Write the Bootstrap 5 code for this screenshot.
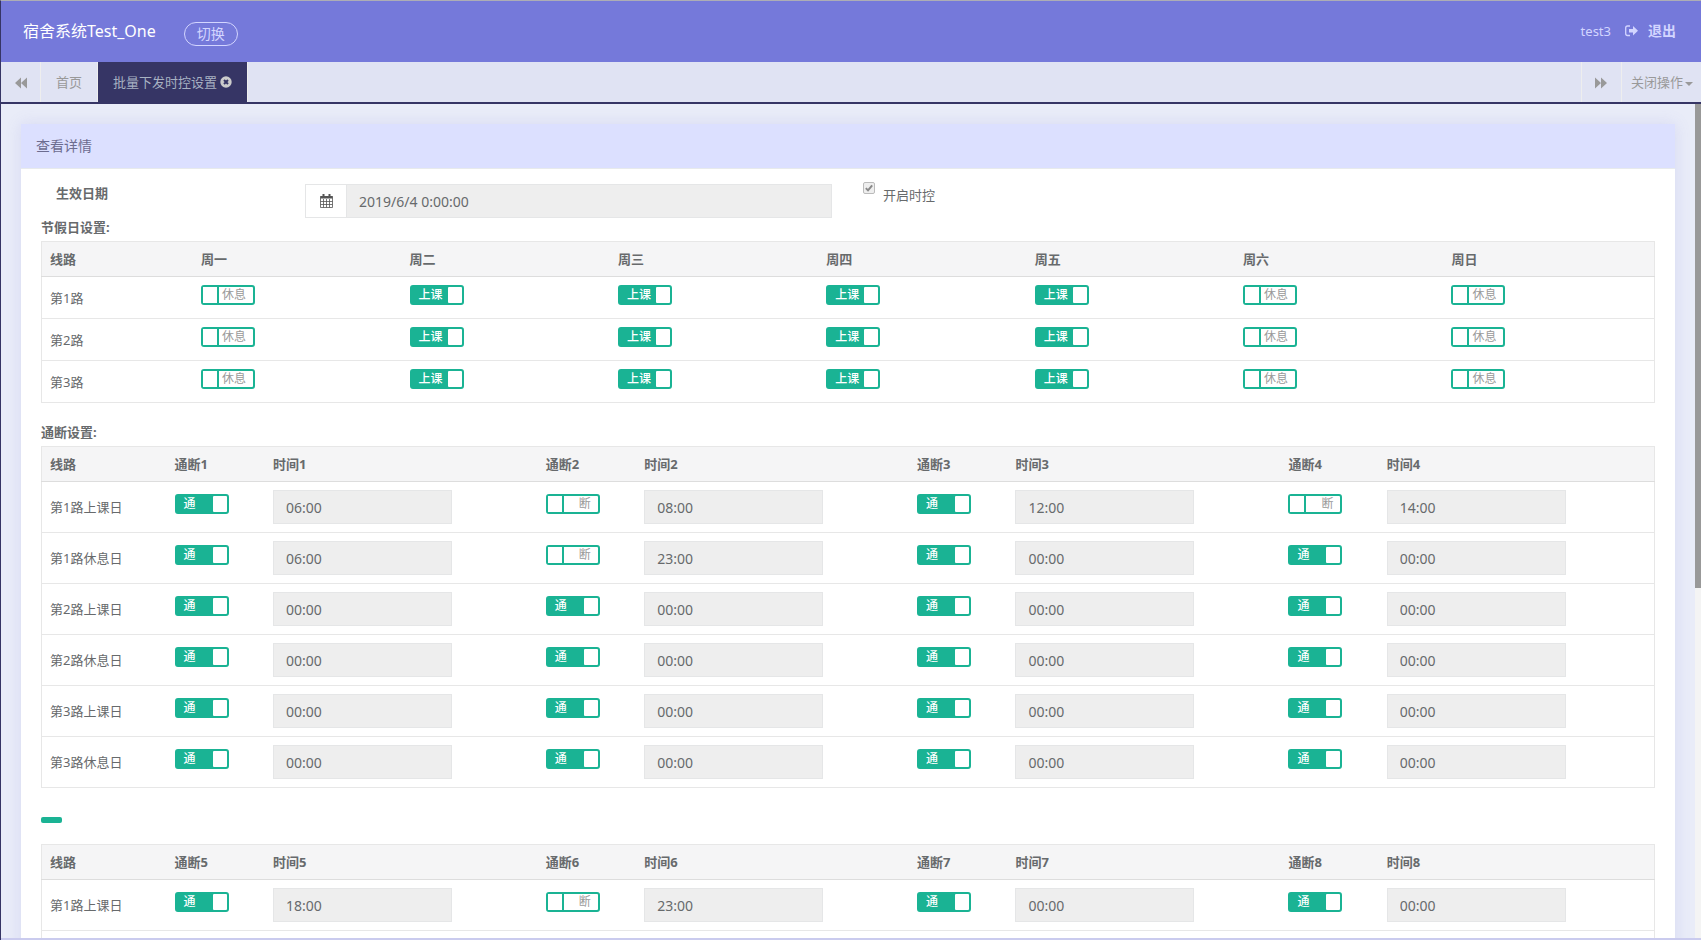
<!DOCTYPE html>
<html lang="zh-CN">
<head>
<meta charset="utf-8">
<meta name="viewport" content="width=device-width, initial-scale=1">
<title>批量下发时控设置</title>
<link href="https://cdn.jsdelivr.net/npm/bootstrap@5.3.0/dist/css/bootstrap.min.css" rel="stylesheet">
<style>
  :root { --brand: #7579da; --ink: #363565; --green: #1ab394; --line: #e7e7e7; }
  body { font-family: "Noto Sans", "Noto Sans CJK SC", sans-serif; font-size: 13px; line-height: 18px; color: #676a6c;
         background: #e9ecf8; border-left: 1px solid var(--ink); border-top: 1px solid #adadb5; }
  .topbar { background: var(--brand); height: 61px; padding: 0 25px 2px 22px; color: #d3d5ff; }
  .brand-name { font-size: 16px; line-height: 24px; color: #fff; }
  .btn-switch { height: 24px; padding: 0 12px; border: 1px solid #d3d5ff; border-radius: 12px; color: #d3d5ff; font-size: 14px; line-height: 22px; margin: 6px 0 0 28px; }
  .topbar a { color: #d3d5ff; font-size: 14px; font-weight: 700; gap: 10px; margin-left: 14px; }
  .tabbar { background: #e0e3f3; height: 42px; border-bottom: 2px solid var(--ink); color: #999; }
  .tabbar button, .tabbar a { display: flex; align-items: center; justify-content: center; border: 0; background: none; color: #999; padding: 0 15px; text-decoration: none; }
  .tabbar .sep-end { border-right: 1px solid #eee; }
  .tabbar .sep-start { border-left: 1px solid #eee; }
  .tabbar .roll { width: 40px; padding: 0; }
  .tabbar .roll svg { margin-top: 2px; }
  .tabbar .tab-current { background: var(--ink); color: #a7b1c2; padding: 0 15px; }
  .tabbar .tab-close { padding: 0; margin-left: 3px; }
  .tabbar .menu-close { padding: 0 8px 0 9px; }
  .menu-close::after { margin-left: 2px; border-top-width: 4px; border-left-width: 4px; border-right-width: 4px; margin-top: 4px; }
  .work { border-bottom: 2px solid #cacbee; }
  .work-body { padding: 20px 20px 0; }
  .track { width: 6px; background: #f4f4f4; }
  .thumb { height: 58%; background: #999; }
  .panel { border: 0; border-radius: 0; box-shadow: 0 0 15px rgba(117, 121, 218, .16); color: inherit; }
  .panel > .card-header { background: #dce0ff; border-bottom: 1px solid #e7eaec; border-radius: 0; height: 45px; padding: 13px 15px; font-size: 14px; color: #6c6c8f; }
  .panel > .card-body { padding: 13px 20px; }
  .date-label { width: 16.36%; padding: 2px 0 0 15px; font-weight: 700; }
  .date-group { width: 32.65%; height: 34px; margin-top: 2px; }
  .date-group .input-group-text { width: 42px; justify-content: center; background: #fff; border-color: #e5e6e7; border-radius: 0; padding: 0; color: #555; }
  .flat, .flat:disabled { height: 34px; padding: 6px 12px; border: 1px solid #e5e6e7; border-radius: 0; background: #eee; color: #676a6c; font-size: 14px; line-height: 20px; }
  .check-on { margin-left: 31px; gap: 8px; }
  .check-on .form-check-input { width: 12px; height: 12px; margin: 0; border: 1px solid #bbb; border-radius: 2px; opacity: 1; background-color: #eee;
    background-image: url("data:image/svg+xml,%3Csvg xmlns='http://www.w3.org/2000/svg' viewBox='0 0 12 12'%3E%3Cpath d='M2.2 6.2 4.8 8.8 9.8 2.8' fill='none' stroke='%23888' stroke-width='2.4'/%3E%3C/svg%3E"); background-size: 100%; }
  .check-on .form-check-label { opacity: 1 !important; padding-top: 4px; }
  h2 { font-size: 13px; line-height: 18px; font-weight: 700; margin: 0 0 5px; }
  .grid { table-layout: fixed; margin-bottom: 20px; color: inherit; border: 1px solid var(--line); }
  .grid th, .grid td { padding: 0 8px; border: 0; color: inherit; vertical-align: middle; }
  .grid th { height: 35px; background: #f5f5f6; border-bottom: 1px solid #ddd; }
  .grid td { height: 42px; border-bottom: 1px solid var(--line); }
  .grid-time td { height: 51px; }
  .grid .c-way { width: 9.4%; }
  .grid .c-day { width: 12.92%; }
  .grid-time .c-way { width: 7.75%; }
  .grid-time .c-sw { width: 6.1%; }
  .grid-time .c-time { width: 16.92%; }
  .grid th:last-child { width: auto; }
  .grid-time .flat { max-width: 179px; }
  .grid td.cell-sw { vertical-align: top; padding-top: 8px; }
  .grid-time td.cell-sw { padding-top: 12px; }
  .toggle { display: flex; width: 54px; height: 20px; border: 2px solid var(--green); border-radius: 3px; background: #fff; color: #999; font-size: 12px; line-height: 16px; }
  .toggle input { appearance: none; width: 16px; height: 16px; margin: 0; background: #fff; border-right: 2px solid var(--green); box-sizing: border-box; flex: none; }
  .toggle span { flex: 1; text-align: right; padding-right: 7px; white-space: nowrap; }
  .toggle.is-on { flex-direction: row-reverse; background: var(--green); color: #fff; font-weight: 500; }
  .toggle.is-on input { width: 14px; border: 0; border-radius: 1px; }
  .toggle.is-on span { text-align: left; padding: 0 0 0 7px; }
  .more { padding: 9px 0 21px; }
  .btn-more { display: block; width: 21px; height: 6px; padding: 0; border: 0; border-radius: 2px; background: var(--green); }
</style>
</head>
<body class="vh-100 d-flex flex-column overflow-hidden">
<header class="topbar d-flex align-items-center justify-content-between flex-shrink-0">
  <div class="d-flex align-items-center">
    <span class="brand-name">宿舍系统Test_One</span>
    <button type="button" class="btn-switch bg-transparent">切换</button>
  </div>
  <div class="d-flex align-items-center">
    <span>test3</span>
    <a href="#" class="d-flex align-items-center text-decoration-none">
      <svg width="13" height="12" viewBox="0 0 13 12"><path d="M5 1H2.500Q.700 1 .700 3V8.500Q.700 10.500 2.500 10.500H5" fill="none" stroke="currentColor" stroke-width="1.300"/><path d="M4 4H8V1L13 5.750 8 10.500V7.500H4Z" fill="currentColor"/></svg>
      退出
    </a>
  </div>
</header>
<nav class="tabbar d-flex align-items-stretch flex-shrink-0">
  <button type="button" class="roll sep-end" aria-label="向左"><svg width="12" height="12" viewBox="0 0 12 12" fill="currentColor"><path d="M6 .500V11.500L0 6ZM12 .500V11.500L6 6Z"/></svg></button>
  <a href="#" class="sep-end">首页</a>
  <div class="tab-current sep-end d-flex align-items-stretch">
    <a href="#" class="p-0 text-reset">批量下发时控设置</a>
    <button type="button" class="tab-close" aria-label="关闭"><svg width="12" height="12" viewBox="0 0 12 12"><circle cx="6" cy="6" r="5.700" fill="#ccc"/><path d="M4 4 8 8M8 4 4 8" stroke="#363565" stroke-width="2"/></svg></button>
  </div>
  <button type="button" class="roll sep-start ms-auto" aria-label="向右"><svg width="12" height="12" viewBox="0 0 12 12" fill="currentColor"><path d="M0 .500V11.500L6 6ZM6 .500V11.500L12 6Z"/></svg></button>
  <button type="button" class="menu-close sep-start dropdown-toggle" data-bs-toggle="dropdown">关闭操作</button>
</nav>
<div class="work d-flex flex-grow-1 overflow-hidden">
  <main class="work-body flex-grow-1">
    <section class="card panel">
      <div class="card-header">查看详情</div>
      <div class="card-body">
        <div class="d-flex align-items-start">
          <label for="day" class="date-label">生效日期</label>
          <div class="input-group date-group flex-nowrap">
            <span class="input-group-text"><svg width="13" height="14" viewBox="0 0 13 14"><path d="M.500 2.500H12.500V13.500H.500ZM.500 7.500H12.500M.500 10.500H12.500M3.500 5V13.500M6.500 5V13.500M9.500 5V13.500" fill="none" stroke="currentColor" stroke-width=".8"/><path d="M.500 2H12.500V4.500H.500ZM2.500 0H4.500V4H2.500ZM8.500 0H10.500V4H8.500Z" fill="currentColor"/></svg></span>
            <input id="day" type="text" class="form-control flat" value="2019/6/4 0:00:00" disabled>
          </div>
          <div class="check-on d-flex align-items-start">
            <input id="enable" type="checkbox" class="form-check-input" checked disabled>
            <label for="enable" class="form-check-label">开启时控</label>
          </div>
        </div>
        <h2>节假日设置:</h2>
        <table class="table grid" id="holidays"></table>
        <h2>通断设置:</h2>
        <table class="table grid grid-time" id="times-a"></table>
        <div class="more"><button type="button" class="btn-more" aria-label="更多"></button></div>
        <table class="table grid grid-time" id="times-b"></table>
      </div>
    </section>
  </main>
  <div class="track flex-shrink-0"><div class="thumb"></div></div>
</div>
<script src="https://cdn.jsdelivr.net/npm/bootstrap@5.3.0/dist/js/bootstrap.bundle.min.js"></script>
<script>
  const toggle = (on, yes, no) =>
    `<td class="cell-sw"><label class="toggle ${on ? 'is-on' : ''}"><input type="checkbox" ${on ? 'checked' : ''} disabled><span>${on ? yes : no}</span></label></td>`;

  const days = ['周一', '周二', '周三', '周四', '周五', '周六', '周日'];
  const working = [0, 1, 1, 1, 1, 0, 0];
  document.getElementById('holidays').innerHTML =
    `<thead><tr><th class="c-way">线路</th>${days.map(d => `<th class="c-day">${d}</th>`).join('')}</tr></thead><tbody>` +
    [1, 2, 3].map(n => `<tr><td>第${n}路</td>${working.map(on => toggle(on, '上课', '休息')).join('')}</tr>`).join('') + '</tbody>';

  // Each slot is [switched on, time]; first is the number of the first slot.
  function timeTable(id, first, rows) {
    const head = [0, 1, 2, 3].map(i => `<th class="c-sw">通断${first + i}</th><th class="c-time">时间${first + i}</th>`).join('');
    const body = rows.map(([name, ...slots]) => name
      ? `<tr><td>${name}</td>${slots.map(([on, time], i) => toggle(on, '通', '断') +
        `<td><input type="text" class="form-control flat" aria-label="${name} 时间${first + i}" value="${time}" disabled></td>`).join('')}</tr>`
      : '<tr><td colspan="9"></td></tr>').join('');
    document.getElementById(id).innerHTML = `<thead><tr><th class="c-way">线路</th>${head}</tr></thead><tbody>${body}</tbody>`;
  }
  const idle = [1, '00:00'];
  timeTable('times-a', 1, [
    ['第1路上课日', [1, '06:00'], [0, '08:00'], [1, '12:00'], [0, '14:00']],
    ['第1路休息日', [1, '06:00'], [0, '23:00'], idle, idle],
    ['第2路上课日', idle, idle, idle, idle],
    ['第2路休息日', idle, idle, idle, idle],
    ['第3路上课日', idle, idle, idle, idle],
    ['第3路休息日', idle, idle, idle, idle]
  ]);
  timeTable('times-b', 5, [
    ['第1路上课日', [1, '18:00'], [0, '23:00'], idle, idle],
    ['']
  ]);
</script>
</body>
</html>
